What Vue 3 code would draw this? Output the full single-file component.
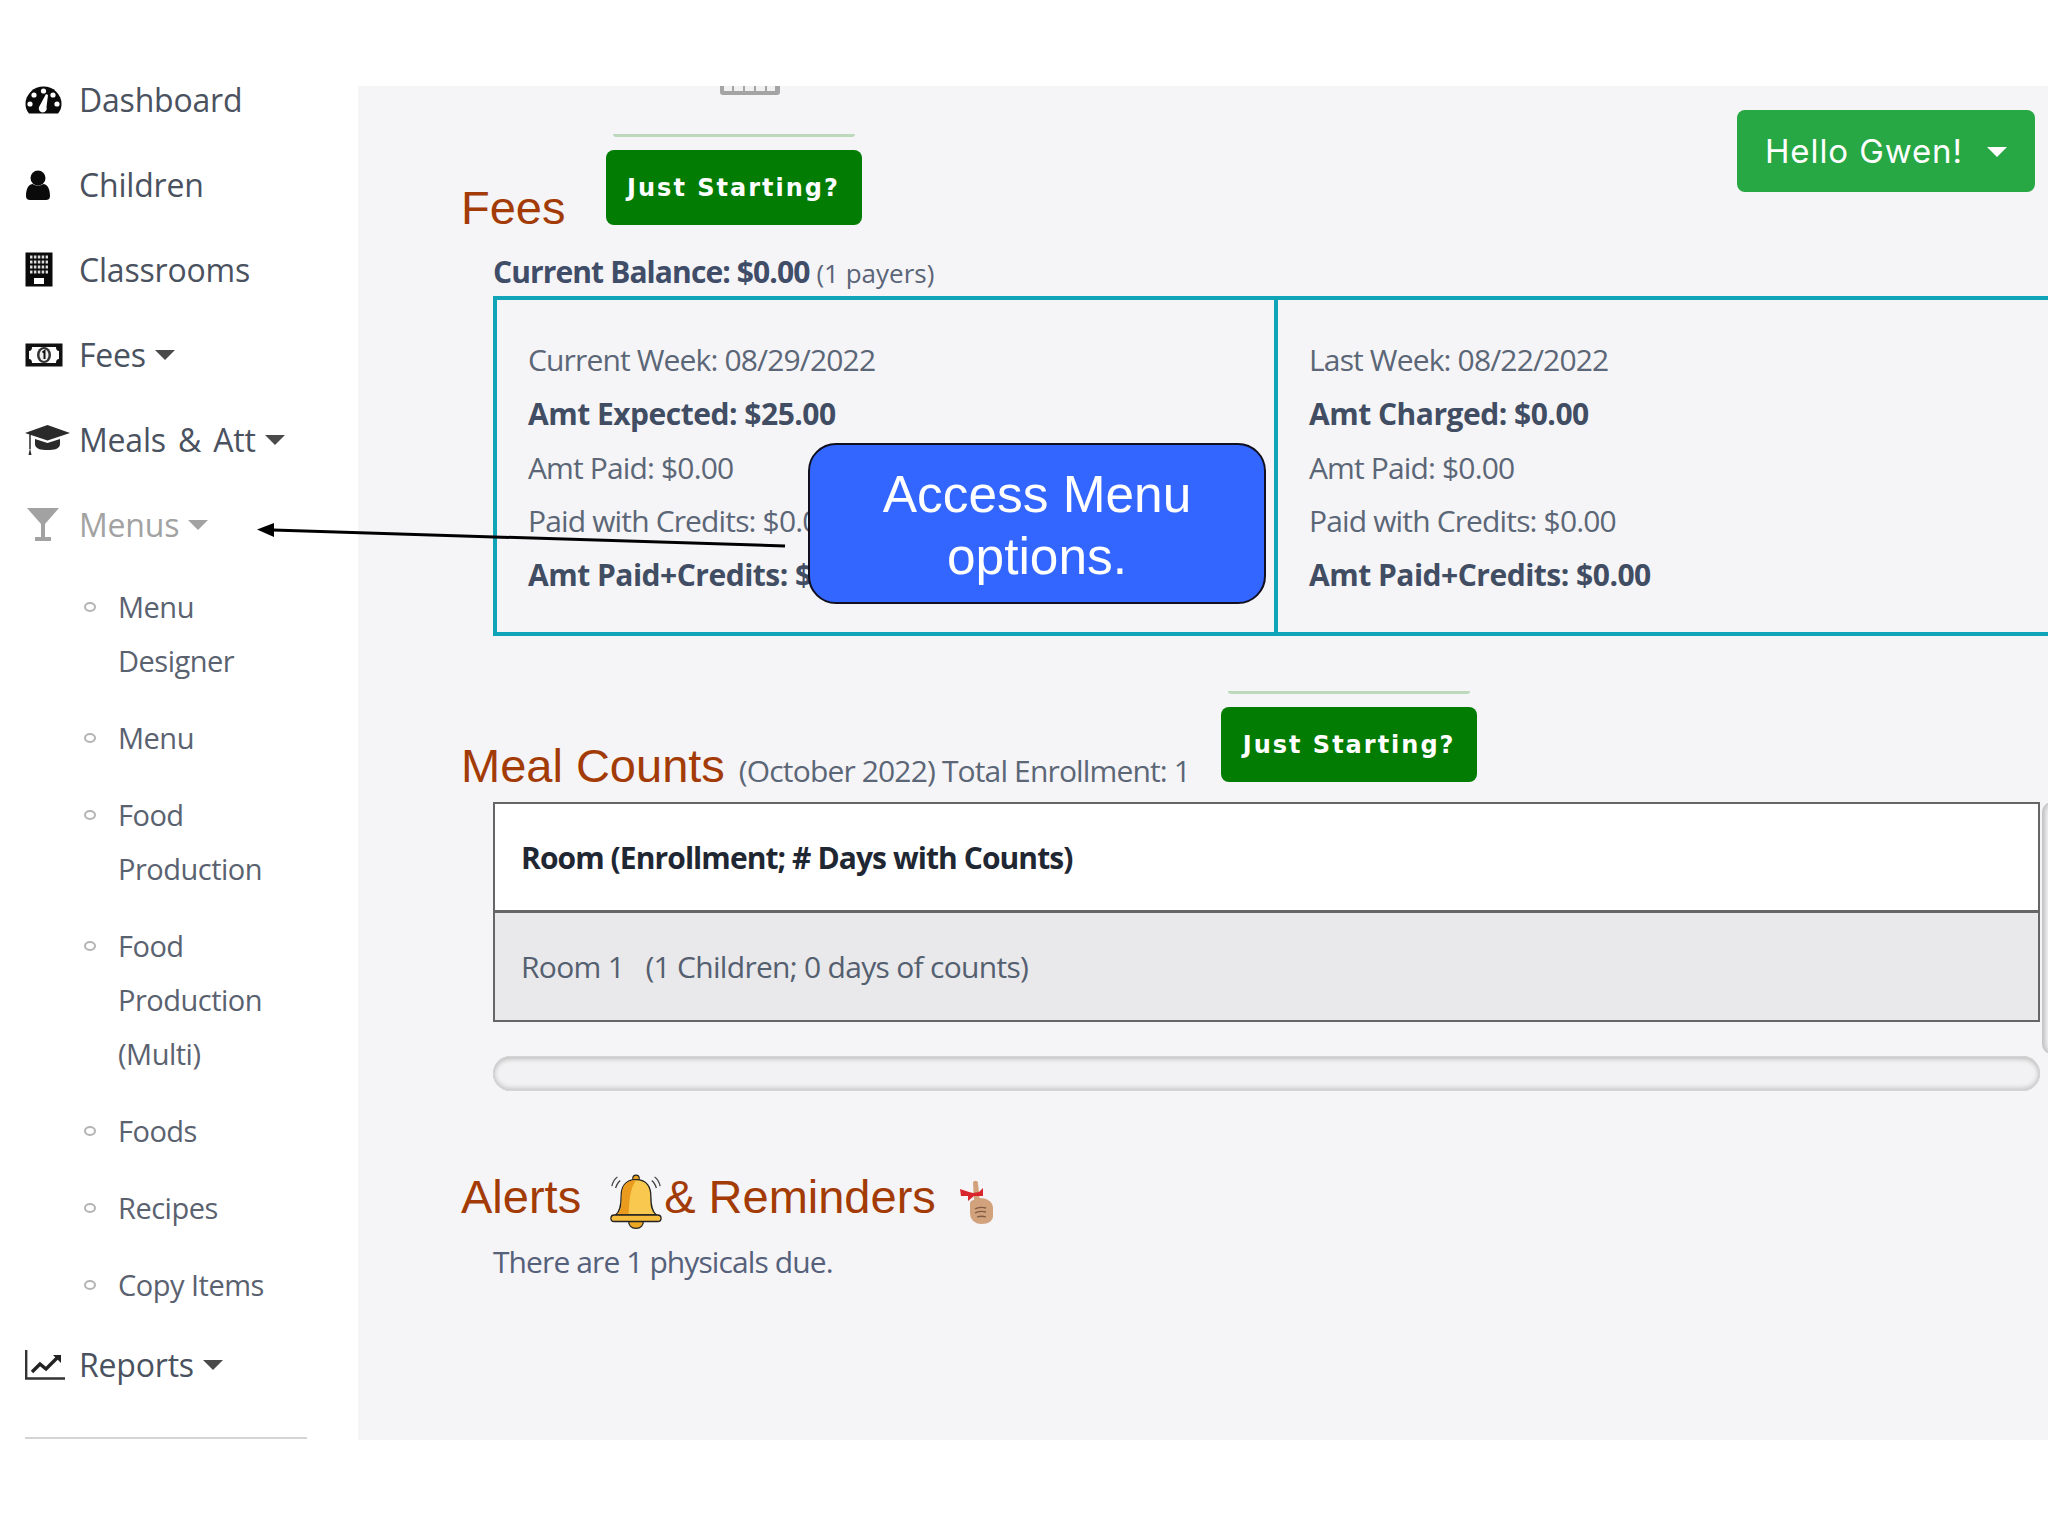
<template>
  <div class="page">
    <aside class="sidebar">
      <a class="nav-row">
        <span class="icon-box">
          <svg width="37" height="28" viewBox="0 0 37 28">
            <path d="M4 27.5 C1.5 24.5 .5 21.500 .5 18 A18 17.500 0 0 1 36.500 18 C36.500 21.500 35.500 24.500 33 27.500 Z" fill="#0a0a0a" />
            <circle cx="18.500" cy="5" r="2.600" fill="#fff" />
            <circle cx="9" cy="9" r="2.600" fill="#fff" />
            <circle cx="28" cy="9" r="2.600" fill="#fff" />
            <circle cx="5" cy="18" r="2.600" fill="#fff" />
            <circle cx="32" cy="18" r="2.600" fill="#fff" />
            <path d="M14 21 L21 8 L23 9 L21.500 21 A4 4 0 1 1 14 21 Z" fill="#fff" />
          </svg>
        </span>
        <span>Dashboard</span>
      </a>
      <a class="nav-row">
        <span class="icon-box">
          <svg width="26" height="30" viewBox="0 0 26 30">
            <circle cx="13" cy="8" r="7.500" fill="#0a0a0a" />
            <path d="M1 26 C1 18 4 14 8 14 C10 16 16 16 18 14 C22 14 25 18 25 26 C25 29 23 30 21 30 H5 C3 30 1 29 1 26 Z" fill="#0a0a0a" />
          </svg>
        </span>
        <span>Children</span>
      </a>
      <a class="nav-row">
        <span class="icon-box">
          <svg width="28" height="35" viewBox="0 0 28 35">
            <rect x="0.500" y="0.500" width="27" height="34" fill="#0a0a0a" />
            <path d="M5 5 H23 M5 10 H23 M5 15 H23 M5 20 H23" stroke="#fff" stroke-width="3" stroke-dasharray="2.500 1.400" opacity=".85" />
            <rect x="9" y="26" width="10" height="6" fill="#fff" />
          </svg>
        </span>
        <span>Classrooms</span>
      </a>
      <a class="nav-row">
        <span class="icon-box">
          <svg width="38" height="24" viewBox="0 0 38 24">
            <rect x="0.500" y="0.500" width="37" height="23" fill="#111" />
            <path d="M7 4 H31 C31 6.500 32 8 34 8 V16 C32 16 31 17.500 31 20 H7 C7 17.500 6 16 4 16 V8 C6 8 7 6.500 7 4 Z" fill="#fff" />
            <ellipse cx="19" cy="12" rx="7" ry="8" fill="#333" />
            <ellipse cx="19" cy="12" rx="4.500" ry="6" fill="#eee" />
            <path d="M17.500 9.500 L19.500 8 V16" stroke="#111" stroke-width="2" fill="none" />
          </svg>
        </span>
        <span>Fees</span><i class="caret"></i>
      </a>
      <a class="nav-row">
        <span class="icon-box">
          <svg width="45" height="30" viewBox="0 0 45 30">
            <path d="M22.500 0 L45 8 L22.500 15.500 L6 10 L0 8 Z" fill="#2a2a2a" />
            <path d="M10 14 L22.500 18 L35 14 V19 C35 24 29 25 22.500 25 C16 25 10 24 10 19 Z" fill="#2a2a2a" />
            <path d="M5 9 V24" stroke="#2a2a2a" stroke-width="1.500" />
            <path d="M3.500 30 L5 23 L6.500 30 Z" fill="#2a2a2a" />
          </svg>
        </span>
        <span>Meals &amp; Att</span><i class="caret"></i>
      </a>
      <a class="nav-row active">
        <span class="icon-box">
          <svg class="glass" width="32" height="33" viewBox="0 0 32 33">
            <path d="M0 0 H32 L18 16 V29 H24 V33 H8 V29 H14 V16 Z" fill="#a2a2a2" />
          </svg>
        </span>
        <span>Menus</span><i class="caret"></i>
      </a>

      <ul class="submenu">
        <li v-for="item in menuItems" :key="item">
          <span class="bullet"></span>
          <span class="sub-label">{{ item }}</span>
        </li>
      </ul>

      <a class="nav-row reports">
        <span class="icon-box">
          <svg width="40" height="30" viewBox="0 0 40 30">
            <path d="M1.200 0 V28.500 H40" stroke="#333" stroke-width="2.400" fill="none" />
            <path d="M7 22 L15 14 L21 19 L32 8" stroke="#222" stroke-width="3.400" fill="none" />
            <path d="M28 5 H36 V13 Z" fill="#222" />
          </svg>
        </span>
        <span>Reports</span><i class="caret"></i>
      </a>
      <hr class="side-rule" />
    </aside>

    <main class="content">
      <section class="head-row">
        <h2 class="title">Fees</h2>
        <div class="starter">
          <span class="clip-chip"><b v-for="n in 5" :key="n"></b></span>
          <span class="faint-line"></span>
          <button class="start-btn">Just Starting?</button>
        </div>
        <button class="hello-btn">Hello Gwen! <i class="caret light"></i></button>
      </section>

      <p class="balance"><strong>Current Balance: $0.00</strong> <small>(1 payers)</small></p>

      <div class="weeks">
        <div class="week first">
          <p>Current Week: 08/29/2022</p>
          <p><strong>Amt Expected: $25.00</strong></p>
          <p>Amt Paid: $0.00</p>
          <p>Paid with Credits: $0.00</p>
          <p><strong>Amt Paid+Credits: $0.00</strong></p>
        </div>
        <div class="week">
          <p>Last Week: 08/22/2022</p>
          <p><strong>Amt Charged: $0.00</strong></p>
          <p>Amt Paid: $0.00</p>
          <p>Paid with Credits: $0.00</p>
          <p><strong>Amt Paid+Credits: $0.00</strong></p>
        </div>
      </div>

      <section class="head-row meals">
        <h2 class="title">Meal Counts</h2>
        <span class="title-note">(October 2022) Total Enrollment: 1</span>
        <div class="starter second">
          <span class="faint-line"></span>
          <button class="start-btn">Just Starting?</button>
        </div>
      </section>

      <div class="table-area">
        <div class="table-col">
          <table class="counts">
            <thead>
              <tr><th>Room (Enrollment; # Days with Counts)</th></tr>
            </thead>
            <tbody>
              <tr><td>Room 1 &nbsp; (1 Children; 0 days of counts)</td></tr>
            </tbody>
          </table>
          <div class="hscroll"></div>
        </div>
        <div class="vscroll"></div>
      </div>

      <h2 class="title alerts">
        <span>Alerts</span>
        <svg class="bell" width="52" height="56" viewBox="0 0 56 60">
          <path d="M2 13 C3 8 5 5 8 3 M6 15 C7 12 8 9 11 7 M54 13 C53 8 51 5 48 3 M50 15 C49 12 48 9 45 7" stroke="#444" stroke-width="1.400" fill="none" />
          <circle cx="28" cy="4.500" r="3.500" fill="#e9a11f" stroke="#222" stroke-width="1.200" />
          <path d="M28 6 C16 6 12 14 12 24 C12 34 11 40 6 44 H50 C45 40 44 34 44 24 C44 14 40 6 28 6 Z" fill="#f8c84f" stroke="#222" stroke-width="1.400" />
          <path d="M28 6.700 C16 6.700 12.700 14 12.700 24 C12.700 34 11.700 40 7.500 43.300 H20 C21 30 21 16 28 6.700 Z" fill="#ea9a1d" />
          <path d="M20 50 H36 C36 55 33 58.500 28 58.500 C23 58.500 20 55 20 50 Z" fill="#eaa823" stroke="#222" stroke-width="1.400" />
          <rect x="1" y="44" width="54" height="7" rx="3.500" fill="#f6bd3d" stroke="#222" stroke-width="1.400" />
        </svg>
        <span>&amp; Reminders</span>
        <svg class="finger" width="34" height="44" viewBox="0 0 34 44">
          <path d="M13 3 C13 0 18 0 18 3 L19.500 18 C26 18 33 21 33 28 V36 C33 41 28 44 22 44 C14 44 10 39 10 33 V24 C10 21 12 20 14 20 Z" fill="#d2a27c" />
          <path d="M15 29 C18 27 22 27 26 28 M15 33 C18 31 22 31 26 32 M17 37 C20 36 23 36 26 37" stroke="#7d5b44" stroke-width="1.300" fill="none" />
          <path d="M0 9 L9 12 L13 13 L19 12 L23 8 L23 16 L18 16 L14 16 L8 21 L8 16 L1 16 Z" fill="#d8262c" />
        </svg>
      </h2>
      <p class="alert-text">There are 1 physicals due.</p>
    </main>

    <!-- callout over the page -->
    <svg class="arrow" width="540" height="30" viewBox="0 0 540 30">
      <path d="M530 24 L18 8" stroke="#000" stroke-width="3" />
      <path d="M2 7.500 L19 1 L19 15 Z" fill="#000" />
    </svg>
    <div class="callout">Access Menu<br />options.</div>
  </div>
</template>

<script setup>
const menuItems = [
  "Menu Designer",
  "Menu",
  "Food Production",
  "Food Production (Multi)",
  "Foods",
  "Recipes",
  "Copy Items",
];
</script>

<style>
body {
  margin: 0;
  background: #fff;
}
</style>

<style scoped>
.page {
  position: relative;
  display: flex;
  width: 2048px;
  height: 1536px;
  overflow: hidden;
  background: #fff;
  font-family: "Open Sans", "Noto Sans", sans-serif;
  color: #4b5a72;
}

/* sidebar */
.sidebar {
  flex: 0 0 358px;
  box-sizing: border-box;
  padding: 57px 0 0 25px;
}

.nav-row {
  display: flex;
  align-items: center;
  height: 85px;
  font-size: 32px;
  letter-spacing: -0.2px;
  word-spacing: 4px;
  color: #4a5260;
}

.icon-box {
  flex: none;
  display: flex;
  width: 54px;
}

.active {
  color: #a2a2a2;
}

.glass {
  margin-left: 2px;
}

.caret {
  display: inline-block;
  width: 0;
  height: 0;
  margin-left: 9px;
  border-top: 10px solid #4a4a4a;
  border-left: 10px solid transparent;
  border-right: 10px solid transparent;
}

.active .caret {
  border-top-color: #a2a2a2;
}

.caret.light {
  border-top-color: #fff;
  margin-left: 14px;
  vertical-align: 6px;
}

.submenu {
  list-style: none;
  margin: 13px 0 0;
  padding: 0;
}

.submenu li {
  display: flex;
  margin-bottom: 23px;
  font-size: 29px;
  line-height: 54px;
  letter-spacing: -0.5px;
  color: #5a6270;
}

.bullet {
  flex: none;
  box-sizing: border-box;
  width: 12px;
  height: 10px;
  margin: 22px 22px 0 59px;
  border: 2px solid #b4b4b4;
  border-radius: 50%;
}

.sub-label {
  max-width: 175px;
}

.reports {
  margin-top: -13px;
}

.side-rule {
  width: 282px;
  margin: 30px 0 0;
  border: 0;
  border-top: 2px solid #d4d4d4;
}

/* main column */
.content {
  flex: 1;
  min-width: 0;
  height: 1354px;
  margin-top: 86px;
  padding-left: 103px;
  box-sizing: border-box;
  overflow: hidden;
  background: #f5f4f6;
}

.head-row {
  display: flex;
  align-items: flex-end;
  height: 145px;
}

.title {
  margin: 0;
  font-family: "Liberation Sans", Arial, sans-serif;
  font-size: 47px;
  line-height: 47px;
  font-weight: 400;
  color: #a33b06;
}

.starter {
  display: flex;
  flex-direction: column;
  align-items: center;
  width: 256px;
  margin: 0 0 6px 40px;
}

.clip-chip {
  display: flex;
  gap: 2px;
  box-sizing: border-box;
  width: 60px;
  height: 11px;
  margin: 0 0 39px 32px;
  padding: 0 4px 4px;
  background: #a4a4a4;
  border-radius: 0 0 3px 3px;
}

.clip-chip b {
  flex: 1;
  background: #f1f1f1;
}

.faint-line {
  width: 242px;
  height: 3px;
  margin-bottom: 13px;
  border-radius: 0 0 4px 4px;
  background: #bcd9bc;
}

.start-btn {
  width: 256px;
  height: 75px;
  padding: 0;
  border: 0;
  border-radius: 8px;
  background: #027c02;
  color: #fff;
  font-family: "DejaVu Sans", Verdana, sans-serif;
  font-size: 24px;
  font-weight: 700;
  letter-spacing: 2px;
}

.hello-btn {
  align-self: flex-start;
  box-sizing: border-box;
  width: 298px;
  height: 82px;
  margin: 24px 13px 0 auto;
  padding: 0;
  border: 0;
  border-radius: 8px;
  background: #28a745;
  color: #fff;
  font-family: Inter, sans-serif;
  font-size: 33px;
  letter-spacing: 0.900px;
}

.balance {
  margin: 18px 0 0 32px;
  font-size: 30px;
  line-height: 46px;
  letter-spacing: -0.9px;
  color: #3f4d68;
}

.balance small {
  font-size: 26px;
  letter-spacing: 0;
  color: #5a6578;
}

.weeks {
  display: flex;
  box-sizing: border-box;
  width: 1800px;
  height: 340px;
  margin-left: 32px;
  border: 4px solid #10a4b9;
}

.week {
  padding: 33px 31px;
  font-size: 30px;
  line-height: 53.8px;
  letter-spacing: -0.85px;
  color: #5b6676;
  white-space: nowrap;
}

.week.first {
  flex: 0 0 781px;
  box-sizing: border-box;
  border-right: 4px solid #10a4b9;
}

.week p {
  margin: 0;
}

.week strong {
  letter-spacing: -0.5px;
  color: #414d63;
}

.meals {
  height: 100px;
  margin-top: 53px;
}

.title-note {
  margin: 0 0 -5px 14px;
  font-size: 30px;
  line-height: 47px;
  letter-spacing: -0.85px;
  color: #5b6676;
}

.second {
  margin: 0 0 7px 31px;
}

.table-area {
  display: grid;
  grid-template-columns: 1547px 20px;
  column-gap: 2px;
  margin: 13px 0 0 32px;
}

.counts {
  box-sizing: border-box;
  width: 100%;
  border-collapse: collapse;
  border: 2px solid #666;
}

.counts th,
.counts td {
  padding: 0 0 0 26px;
  text-align: left;
  font-size: 30px;
}

.counts th {
  height: 106px;
  background: #fff;
  color: #1f2733;
  border-bottom: 3px solid #666;
  letter-spacing: -0.92px;
}

.counts td {
  height: 107px;
  background: #e9e8ea;
  color: #545f70;
  letter-spacing: -0.7px;
}

.hscroll {
  box-sizing: border-box;
  height: 35px;
  margin-top: 34px;
  border-radius: 18px;
  background: #f2f1f3;
  box-shadow: inset 0 0 0 1px #d5d5d5, inset 0 3px 5px #bdbdbd, inset 0 -3px 5px #c8c8c8;
}

.vscroll {
  height: 252px;
  border-radius: 10px 0 0 10px;
  background: #f2f1f3;
  box-shadow: inset 3px 0 5px #bdbdbd;
}

.alerts {
  display: flex;
  align-items: flex-end;
  margin-top: 82px;
}

.bell {
  flex: none;
  margin: 0 2px -10px 29px;
}

.finger {
  flex: none;
  margin: 0 0 -4px 24px;
}

.alert-text {
  margin: 15px 0 0 32px;
  font-size: 30px;
  line-height: 54px;
  letter-spacing: -0.9px;
  color: #55617a;
}

/* annotation */
.callout {
  position: absolute;
  left: 808px;
  top: 443px;
  box-sizing: border-box;
  width: 458px;
  height: 161px;
  padding-top: 18px;
  border: 2px solid #101020;
  border-radius: 28px;
  background: #3366ff;
  color: #fff;
  font-family: "Liberation Sans", Arial, sans-serif;
  font-size: 51.4px;
  line-height: 62px;
  text-align: center;
}

.arrow {
  position: absolute;
  left: 255px;
  top: 522px;
}
</style>
